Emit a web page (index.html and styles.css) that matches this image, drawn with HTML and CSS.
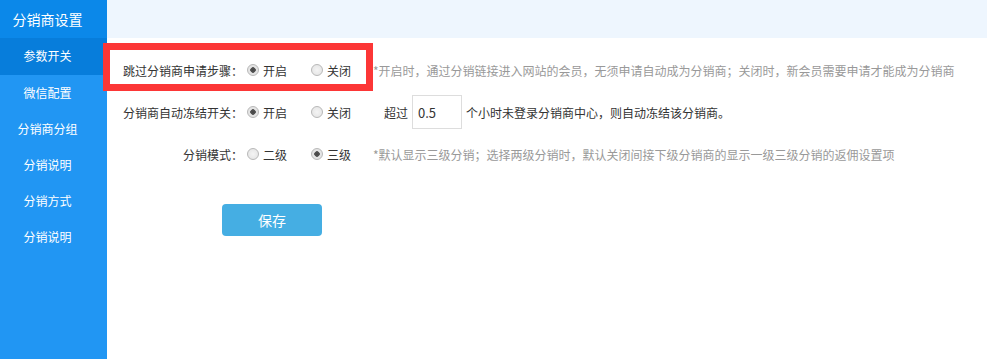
FILE: index.html
```html
<!DOCTYPE html>
<html lang="zh-CN">
<head>
    <meta charset="UTF-8">
    <meta name="viewport" content="width=device-width, initial-scale=1.0">
    <title>分销商设置</title>
    <link rel="stylesheet" href="styles.css">
</head>
<body>
    <div class="layout">
        <aside class="sidebar">
            <div class="sidebar-title">分销商设置</div>
            <ul class="menu">
                <li class="active">参数开关</li>
                <li>微信配置</li>
                <li>分销商分组</li>
                <li>分销说明</li>
                <li>分销方式</li>
                <li>分销说明</li>
            </ul>
        </aside>
        <main class="main">
            <div class="topbar"></div>
            <form class="settings">
                <div class="row">
                    <label class="row-label">跳过分销商申请步骤：</label>
                    <label class="opt"><input type="radio" name="skip" checked> 开启</label>
                    <label class="opt"><input type="radio" name="skip"> 关闭</label>
                    <span class="hint">*开启时，通过分销链接进入网站的会员，无须申请自动成为分销商；关闭时，新会员需要申请才能成为分销商</span>
                </div>
                <div class="row">
                    <label class="row-label">分销商自动冻结开关：</label>
                    <label class="opt"><input type="radio" name="freeze" checked> 开启</label>
                    <label class="opt"><input type="radio" name="freeze"> 关闭</label>
                    <span class="freeze">超过 <input type="text" class="hours" value="0.5"> 个小时未登录分销商中心，则自动冻结该分销商。</span>
                </div>
                <div class="row">
                    <label class="row-label">分销模式：</label>
                    <label class="opt"><input type="radio" name="mode"> 二级</label>
                    <label class="opt"><input type="radio" name="mode" checked> 三级</label>
                    <span class="hint">*默认显示三级分销；选择两级分销时，默认关闭间接下级分销商的显示一级三级分销的返佣设置项</span>
                </div>
                <button type="button" class="save">保存</button>
            </form>
        </main>
    </div>
    <div class="highlight"></div>
</body>
</html>
```

FILE: styles.css
```css
* {
    box-sizing: border-box;
}

body {
    margin: 0;
    font-family: "Noto Sans CJK SC", "Noto Sans", sans-serif;
    font-size: 12px;
    color: #333;
    background: #fff;
}

.layout {
    display: flex;
    height: 100vh;
}

.sidebar {
    width: 107px;
    flex-shrink: 0;
    background: #2196f3;
    color: #fff;
    text-align: center;
    padding-right: 12px;
}

.sidebar-title {
    height: 38px;
    line-height: 38px;
    font-size: 14px;
    background: #0b88e9;
    margin-right: -12px;
    padding-right: 12px;
}

.menu {
    list-style: none;
    margin: 0;
    padding: 0;
}

.menu li {
    height: 36px;
    line-height: 36px;
    font-size: 12px;
}

.menu li.active {
    height: 37px;
    line-height: 35px;
    background: #077ddb;
    margin-right: -12px;
    padding-right: 12px;
}

.main {
    flex: 1;
}

.topbar {
    height: 38px;
    background: #eef6fe;
}

.settings {
    padding-top: 11px;
}

.row {
    display: flex;
    align-items: center;
    height: 42px;
    white-space: nowrap;
}

.row-label {
    width: 140px;
    text-align: right;
    padding-right: 4px;
    margin-right: 0;
}

.opt {
    display: flex;
    align-items: center;
    gap: 4px;
    width: 64px;
}

.opt input {
    appearance: none;
    margin: 0;
    width: 12px;
    height: 12px;
    border-radius: 50%;
    border: 1px solid #b8b8b8;
    background: radial-gradient(circle, #f4f4f4 0, #e2e2e2 100%);
}

.opt input:checked {
    background: radial-gradient(circle, #444 0, #555 2.5px, #e4e4e4 3px, #e4e4e4 100%);
}

.opt + .opt {
    width: 62px;
}

.hint {
    color: #999;
}

.freeze {
    display: flex;
    align-items: center;
    gap: 4px;
    margin-left: 11px;
}

.hours {
    width: 50px;
    height: 34px;
    border: 1px solid #ddd;
    padding: 0 5px;
    font: inherit;
    font-size: 13px;
    color: #333;
}

.save {
    display: block;
    margin: 29px 0 0 115px;
    width: 100px;
    height: 32px;
    border: none;
    border-radius: 4px;
    background: #45aee3;
    color: #fff;
    font-family: inherit;
    font-size: 14px;
    cursor: pointer;
}

.highlight {
    position: absolute;
    left: 103px;
    top: 43px;
    width: 270px;
    height: 48px;
    border: 7px solid #fc3636;
}
```
